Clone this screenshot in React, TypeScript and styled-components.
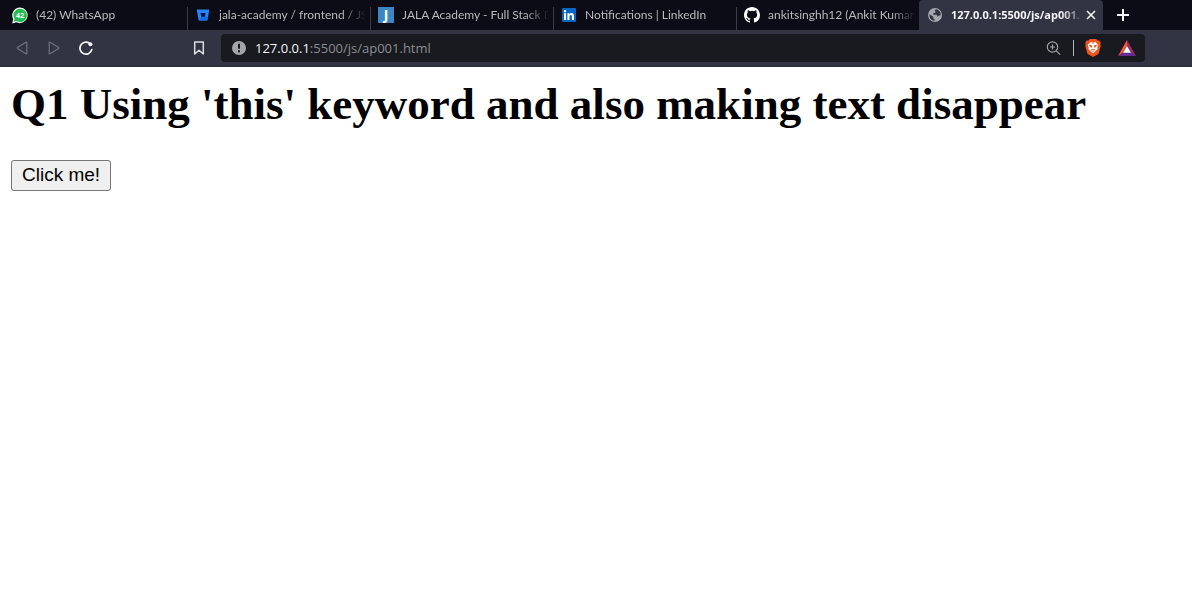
import React, { useState } from "react";
import styled, { createGlobalStyle } from "styled-components";

const GlobalStyle = createGlobalStyle`
  * { box-sizing: border-box; }
  body { margin: 0; background: #fff; }
`;

const tabFont = `Lato, "Open Sans", sans-serif`;
const uiFont = `"Open Sans", "Noto Sans", sans-serif`;

const Chrome = styled.header`
  font-family: ${uiFont};
`;

const TabStrip = styled.nav`
  display: flex;
  height: 30px;
  padding-left: 4px;
  background: #0b0c15;
`;

const Tab = styled.div<{ $active?: boolean; $divider?: boolean }>`
  display: flex;
  align-items: center;
  flex: 0 1 ${(p) => (p.$active ? 184 : 183)}px;
  min-width: 0;
  padding: 0 ${(p) => (p.$active ? 6 : 4)}px 0 8px;
  border-radius: 4px 4px 0 0;
  background: ${(p) =>
    p.$active
      ? "#323443"
      : p.$divider
        ? "linear-gradient(#3b3c44, #3b3c44) left bottom / 1px 23px no-repeat"
        : "none"};
`;

const TabLink = styled.a<{ $active?: boolean }>`
  display: flex;
  align-items: center;
  flex: 1;
  gap: 8px;
  min-width: 0;
  color: ${(p) => (p.$active ? "#f4f4f6" : "#b9babd")};
  font: ${(p) => (p.$active ? `700 11px/30px ${uiFont}` : `400 12px/30px ${tabFont}`)};
  text-decoration: none;

  svg { flex: none; }
`;

const TabTitle = styled.span`
  flex: 1;
  overflow: hidden;
  white-space: nowrap;
  mask-image: linear-gradient(to right, #000 calc(100% - 24px), transparent);
`;

const IconButton = styled.button<{ $width: number; $color?: string }>`
  display: flex;
  align-items: center;
  justify-content: center;
  flex: none;
  width: ${(p) => p.$width}px;
  height: 28px;
  padding: 0;
  border: 0;
  background: none;
  color: ${(p) => p.$color ?? "#f4f4f6"};
`;

const NewTabButton = styled(IconButton)`
  height: 30px;
`;

const Toolbar = styled.div`
  display: flex;
  align-items: center;
  height: 37px;
  padding: 0 47px 0 6px;
  background: #323443;
  border-bottom: 1px solid #2b2c38;
`;

const Spacer = styled.div`
  width: 81px;
`;

const AddressBar = styled.form`
  display: flex;
  align-items: center;
  flex: 1;
  height: 28px;
  margin-left: 6px;
  padding: 0 1px 0 2px;
  border-radius: 4px;
  background: #181a20;
  font-size: 13px;
  line-height: 20px;
`;

const Host = styled.label`
  color: #f4f4f6;
`;

const PathInput = styled.input`
  flex: 1;
  min-width: 0;
  padding: 0;
  border: 0;
  outline: 0;
  background: none;
  color: #8b8d92;
  font: inherit;
`;

const Divider = styled.span`
  width: 1px;
  height: 16px;
  margin: 0 2px 0 4px;
  background: #b5b6ba;
`;

const Page = styled.main`
  padding: 11px 11px;
`;

const Heading = styled.h1`
  margin: 0 0 30px;
  color: #000;
  font: 700 45px/52px "Liberation Serif", "Times New Roman", serif;
`;

const ClickButton = styled.button`
  height: 31px;
  padding: 0 10px 2px;
  border: 1px solid #767676;
  border-radius: 3px;
  background: #efefef;
  color: #000;
  font: 19px/26px "Liberation Sans", Arial, sans-serif;
`;

const BadgeText = styled.text`
  font: 700 8px ${uiFont};
`;

const LetterText = styled.text`
  font: 700 14px ${uiFont};
`;

const WhatsAppIcon = () => (
  <svg width="16" height="17" viewBox="0 0 17 17">
    <path d="M8.5 0a8.3 8.3 0 1 1-3.8 15.800L.2 17l1.100-4.600A8.300 8.300 0 0 1 8.500 0z" fill="#fff" />
    <path d="M8.600 1.300a7.100 7.100 0 1 1-3.700 13.100l-3 .8.8-2.900A7.100 7.100 0 0 1 8.600 1.300z" fill="#20bd50" />
    <BadgeText x="8.5" y="11" textAnchor="middle" fill="#fff">42</BadgeText>
  </svg>
);

const BitbucketIcon = () => (
  <svg width="16" height="16" viewBox="0 0 16 16">
    <path d="M2.200 2.600h11.600a.4.4 0 0 1 .4.5l-1.700 10a.5.5 0 0 1-.5.4H4.200a.6.6 0 0 1-.6-.5L1.800 3.100a.4.4 0 0 1 .4-.5z" fill="#2684ff" />
    <path d="M9.800 9.800H6.300h7l-.8 3.300a.5.5 0 0 1-.5.4H4.200l2.500-3.700z" fill="#176bdf" />
    <path d="M5.500 5.900h5l-.7 3.900H6.300z" fill="#0d1430" />
  </svg>
);

const JalaIcon = () => (
  <svg width="16" height="16" viewBox="0 0 16 16">
    <path d="M0 0h16v16H0z" fill="#3c86c4" />
    <LetterText x="8" y="13" textAnchor="middle" fill="#fff">J</LetterText>
  </svg>
);

const LinkedInIcon = () => (
  <svg width="16" height="16" viewBox="0 0 16 16">
    <rect x="1" y="1" width="14" height="14" rx="1" fill="#0a66c2" />
    <path d="M3 6.300h2.100V13H3zM4.050 3a1.200 1.200 0 1 1 0 2.400 1.200 1.200 0 0 1 0-2.400zM6.400 6.300h2v.9c.4-.7 1.100-1.100 2.100-1.100 2 0 2.500 1.300 2.500 3.100V13h-2.100V9.600c0-.9-.1-1.700-1.100-1.700-1.100 0-1.300.8-1.300 1.700V13H6.400z" fill="#fff" />
  </svg>
);

const GitHubIcon = () => (
  <svg width="16" height="16" viewBox="0 0 16 16" fill="#fff">
    <path d="M8 0C3.580 0 0 3.580 0 8c0 3.540 2.290 6.530 5.470 7.590.4.070.55-.17.55-.38v-1.490c-2.010.37-2.530-.49-2.690-.94-.09-.23-.48-.94-.82-1.130-.28-.15-.68-.52-.01-.53.63-.01 1.080.58 1.230.82.72 1.210 1.870.87 2.330.66.07-.52.28-.87.510-1.070-1.780-.2-3.640-.89-3.640-3.950 0-.87.310-1.590.82-2.150-.08-.2-.36-1.020.08-2.120 0 0 .67-.21 2.200.82a7.600 7.600 0 0 1 4 0c1.530-1.040 2.200-.82 2.200-.82.44 1.100.16 1.920.08 2.120.51.56.82 1.270.82 2.150 0 3.070-1.870 3.750-3.650 3.950.29.25.54.73.54 1.480v2.190c0 .21.15.46.55.38A8 8 0 0 0 16 8c0-4.420-3.580-8-8-8z" />
  </svg>
);

const GlobeIcon = () => (
  <svg width="16" height="16" viewBox="0 0 16 16">
    <circle cx="8" cy="8" r="7" fill="#a5a7ae" />
    <path d="M2.500 7.200 6.300 9.800v1.300c0 .8.700 1.200 1.300 1.200v1.500C4.200 13.500 2 10.500 2.500 7.200zM9 2.200c-1.600 1-1.700 1.500-.6 2.300.8 1-.6 1.700-2 1.700-.8.500-.3 1.500.5 1.500h2c1 0 1.300.7 1.400 1.700 1.300.2 1.500-1.400 3.400-1.200C14 5 11.800 2.500 9 2.200z" fill="#323443" />
  </svg>
);

const TriangleIcon = ({ back }: { back?: boolean }) => (
  <svg width="16" height="16" viewBox="0 0 16 16" fill="none" stroke="currentColor" strokeWidth="1.300" strokeLinejoin="round">
    <path d={back ? "M12.800 2.700v10.600q0 .8-.8.4L3.500 8.600q-.8-.6 0-1.200L12 2.300q.8-.4.8.4z" : "M3.200 2.700v10.600q0 .8.8.4l8.500-5.100q.8-.6 0-1.200L4 2.300q-.8-.4-.8.4z"} />
  </svg>
);

const ReloadIcon = () => (
  <svg width="16" height="16" viewBox="0 0 16 16" fill="none" stroke="currentColor" strokeWidth="1.700" strokeLinecap="round">
    <path d="M13.800 9.500A6 6 0 1 1 11.500 3.300" />
    <circle cx="12.400" cy="4.200" r="2" fill="currentColor" stroke="none" />
  </svg>
);

const BookmarkIcon = () => (
  <svg width="16" height="16" viewBox="0 0 16 16" fill="none" stroke="currentColor" strokeWidth="1.500" strokeLinejoin="round">
    <path d="M3.700 2h8.600v12L8 10.300 3.700 14z" />
  </svg>
);

const InfoIcon = () => (
  <svg width="16" height="16" viewBox="0 0 16 16">
    <circle cx="8" cy="8" r="7" fill="#a2a4a9" />
    <path d="M7 3.800h2v5H7zM7 10.200h2v2H7z" fill="#181a20" />
  </svg>
);

const ZoomIcon = () => (
  <svg width="16" height="16" viewBox="0 0 16 16" fill="none" stroke="currentColor" strokeWidth="1.200">
    <circle cx="7.500" cy="7" r="5.200" />
    <path d="M11.300 10.800 15.200 14.700M7.500 4.500v5M5 7h5" />
  </svg>
);

const BraveIcon = () => (
  <svg width="18" height="20" viewBox="0 0 18 20">
    <path d="M5.800 1h6.400l1.400 1.600 1.700-.2 1.500 2-.5 1.500.5 1.500-2 7.600q-.3 1-1.200 1.600L9 19l-4.600-2.400Q3.500 16 3.200 15l-2-7.600.5-1.500-.5-1.500 1.500-2 1.700.2z" fill="#ef541c" />
    <path d="M9 4.400 11.500 4l2.800 3-1 2.500.3 1.600-2.200 2.100L9 15.300l-2.400-2.100-2.200-2.100.3-1.600-1-2.500 2.800-3z" fill="#fff" />
    <path d="m5 6.600 3 1v.8L7.400 10 5.600 8.600zM13 6.600l-3 1v.8l.6 1.600 1.800-1.400zM6.400 11.800 9 10.800l2.600 1-2.600 2zM8.500 4.400h1V6h-1z" fill="#ef541c" />
    <path d="m7.600 12.100 1.400-.5 1.400.5L9 13.100z" fill="#fff" />
  </svg>
);

const RewardsIcon = () => (
  <svg width="18" height="16" viewBox="0 0 18 16">
    <path d="M9 0 9 6 5 12.500 0 16z" fill="#ff5134" />
    <path d="M9 0 18 16 12.800 12.500 9 6z" fill="#9b2b68" />
    <path d="M0 16 5 12.500h8L18 16z" fill="#662d91" />
    <path d="m9 6 4 6.700H5z" fill="#fff" />
  </svg>
);

const CloseIcon = () => (
  <svg width="10" height="10" viewBox="0 0 10 10" stroke="currentColor" strokeWidth="1.600">
    <path d="m1 1 8 8M9 1 1 9" />
  </svg>
);

const PlusIcon = () => (
  <svg width="12" height="12" viewBox="0 0 12 12" stroke="currentColor" strokeWidth="2">
    <path d="M6 0v12M0 6h12" />
  </svg>
);

const tabs = [
  { title: "(42) WhatsApp", Icon: WhatsAppIcon },
  { title: "jala-academy / frontend / JS", Icon: BitbucketIcon },
  { title: "JALA Academy - Full Stack D", Icon: JalaIcon },
  { title: "Notifications | LinkedIn", Icon: LinkedInIcon },
  { title: "ankitsinghh12 (Ankit Kumar", Icon: GitHubIcon },
  { title: "127.0.0.1:5500/js/ap001.", Icon: GlobeIcon },
];

export default function App() {
  const [path, setPath] = useState(":5500/js/ap001.html");
  const last = tabs.length - 1;

  return (
    <>
      <GlobalStyle />
      <Chrome>
        <TabStrip aria-label="Open tabs">
          {tabs.map(({ title, Icon }, i) => (
            <Tab key={title} $active={i === last} $divider={i > 0}>
              <TabLink href="#" $active={i === last}>
                <Icon />
                <TabTitle>{title}</TabTitle>
              </TabLink>
              {i === last && (
                <IconButton $width={12} aria-label="Close tab">
                  <CloseIcon />
                </IconButton>
              )}
            </Tab>
          ))}
          <NewTabButton $width={40} aria-label="New tab">
            <PlusIcon />
          </NewTabButton>
        </TabStrip>
        <Toolbar>
          <IconButton $width={32} $color="#6b6d79" aria-label="Back"><TriangleIcon back /></IconButton>
          <IconButton $width={32} $color="#6b6d79" aria-label="Forward"><TriangleIcon /></IconButton>
          <IconButton $width={32} aria-label="Reload"><ReloadIcon /></IconButton>
          <Spacer />
          <IconButton $width={32} $color="#dcdde0" aria-label="Bookmark"><BookmarkIcon /></IconButton>
          <AddressBar onSubmit={(e) => e.preventDefault()}>
            <IconButton $width={32} type="button" aria-label="Site information"><InfoIcon /></IconButton>
            <Host htmlFor="address">127.0.0.1</Host>
            <PathInput id="address" value={path} onChange={(e) => setPath(e.target.value)} />
            <IconButton $width={32} $color="#a2a4a9" type="button" aria-label="Zoom"><ZoomIcon /></IconButton>
            <Divider />
            <IconButton $width={34} type="button" aria-label="Brave Shields"><BraveIcon /></IconButton>
            <IconButton $width={34} type="button" aria-label="Brave Rewards"><RewardsIcon /></IconButton>
          </AddressBar>
        </Toolbar>
      </Chrome>
      <Page>
        <Heading>Q1 Using 'this' keyword and also making text disappear</Heading>
        <ClickButton type="button">Click me!</ClickButton>
      </Page>
    </>
  );
}
